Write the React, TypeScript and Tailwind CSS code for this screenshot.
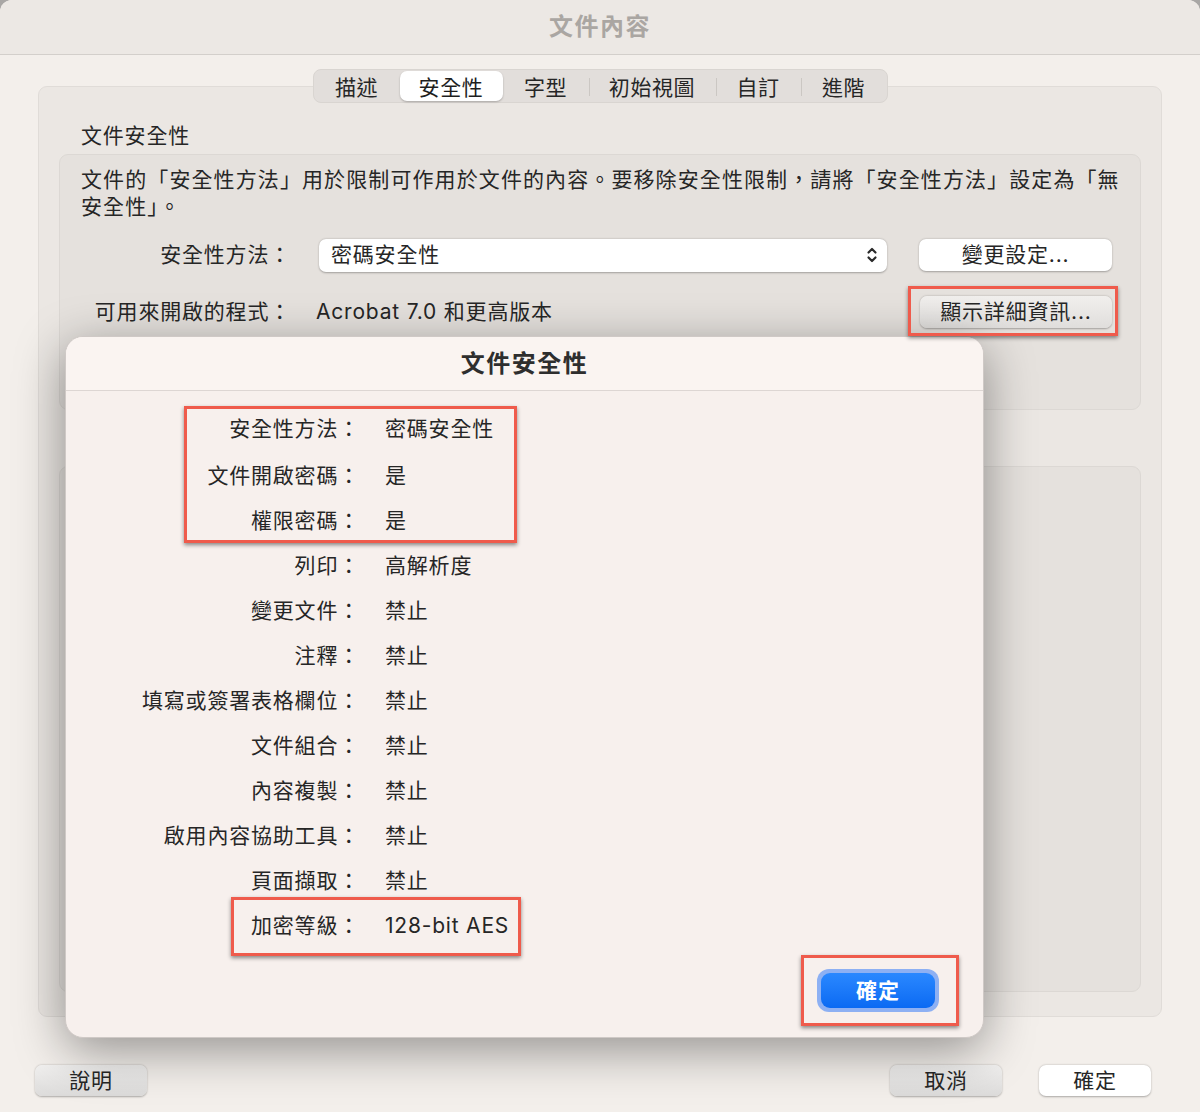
import React from "react";

const FONT = "font-['Inter','Noto_Sans_CJK_TC',sans-serif]";

function Chevrons() {
  return (
    <svg width="12" height="18" viewBox="0 0 12 18" fill="none" stroke="#2a2a2a" strokeWidth="2.2" strokeLinecap="round" strokeLinejoin="round">
      <path d="M2.5 6.5 L6 3 L9.5 6.5" />
      <path d="M2.5 11.5 L6 15 L9.5 11.5" />
    </svg>
  );
}

const tabs = [
  { label: "描述", w: "w-[86px]" },
  { label: "安全性", w: "w-[103px]", active: true },
  { label: "字型", w: "w-[86px]" },
  { label: "初始視圖", w: "w-[127px]", sep: true },
  { label: "自訂", w: "w-[85px]", sep: true },
  { label: "進階", w: "w-[86px]", sep: true },
];

const rows: [string, string][] = [
  ["安全性方法：", "密碼安全性"],
  ["文件開啟密碼：", "是"],
  ["權限密碼：", "是"],
  ["列印：", "高解析度"],
  ["變更文件：", "禁止"],
  ["注釋：", "禁止"],
  ["填寫或簽署表格欄位：", "禁止"],
  ["文件組合：", "禁止"],
  ["內容複製：", "禁止"],
  ["啟用內容協助工具：", "禁止"],
  ["頁面擷取：", "禁止"],
  ["加密等級：", "128-bit AES"],
];

export default function App() {
  return (
    <div className={`${FONT} relative w-[1200px] h-[1112px] overflow-hidden bg-[#a9a7a5] text-[#262626]`}>
      <div className="flex flex-col w-full h-full rounded-t-[12px] overflow-hidden bg-[#f3efeb]">
        {/* title bar */}
        <div className="h-[55px] shrink-0 flex items-center justify-center bg-[#ece8e4] border-b border-[#d3cfcb]">
          <span className="text-[24px] font-bold text-[#aaa6a2] tracking-[1.5px]">文件內容</span>
        </div>

        {/* body */}
        <div className="flex flex-col flex-1 px-[38px]">
          {/* segmented control */}
          <div className="relative z-10 mt-[14px] self-center flex items-center h-[34px] rounded-[8px] bg-[#e2dedb] border border-[#d9d5d1]">
            {tabs.map((t) => (
              <div key={t.label} className={`relative h-full flex items-center justify-center ${t.w}`}>
                {t.sep && <div className="absolute left-0 top-[8px] h-[18px] w-px bg-[#cbc7c3]" />}
                {t.active ? (
                  <div className="w-[103px] h-[30px] rounded-[7px] bg-white shadow-[0_1px_2px_rgba(0,0,0,0.25)] flex items-center justify-center text-[21px] tracking-[0.6px] pt-[3px] text-[#1e1e1e]">
                    {t.label}
                  </div>
                ) : (
                  <span className="text-[21px] tracking-[0.6px] pt-[3px] text-[#262626]">{t.label}</span>
                )}
              </div>
            ))}
          </div>

          {/* tab box */}
          <div className="-mt-[17px] h-[931px] rounded-[9px] bg-[#ebe7e3] border border-[#e0dcd8] px-[20px] flex flex-col">
            <div className="pt-[35px] pl-[22px] text-[21px] leading-[28px] tracking-[0.8px]">文件安全性</div>

            <div className="mt-[4px] h-[256px] rounded-[9px] bg-[#e5e1dd] border border-[#dcd8d4] flex flex-col">
              <p className="pt-[11px] pl-[21px] pr-[10px] text-[21px] leading-[27px] tracking-[1.1px]">
                文件的「安全性方法」用於限制可作用於文件的內容。要移除安全性限制，請將「安全性方法」設定為「無
                <br />
                安全性」。
              </p>

              <div className="mt-[18px] flex items-center h-[34px] text-[21px] tracking-[0.8px]">
                <div className="w-[238px] text-right pr-[7px]">安全性方法：</div>
                <div className="ml-[21px] w-[568px] h-[33px] rounded-[7px] bg-white shadow-[0_0.5px_2px_rgba(0,0,0,0.3)] flex items-center justify-between pl-[12px] pr-[9px]">
                  <span>密碼安全性</span>
                  <Chevrons />
                </div>
                <div className="ml-[32px] w-[193px] h-[32px] rounded-[7px] bg-white shadow-[0_0.5px_2px_rgba(0,0,0,0.3)] flex items-center justify-center">
                  變更設定...
                </div>
              </div>

              <div className="mt-[23px] flex items-center h-[34px] text-[21px] tracking-[0.8px]">
                <div className="w-[238px] text-right pr-[7px]">可用來開啟的程式：</div>
                <div className="ml-[18px]">Acrobat 7.0 和更高版本</div>
                <div className="ml-auto mr-[28px] w-[192px] h-[32px] rounded-[7px] bg-gradient-to-b from-[#f1efed] to-[#e0dedc] shadow-[0_0.5px_2px_rgba(0,0,0,0.3)] flex items-center justify-center">
                  顯示詳細資訊...
                </div>
              </div>
            </div>

            <div className="mt-[56px] h-[526px] rounded-[9px] bg-[#e5e1dd] border border-[#dcd8d4]" />
          </div>

          {/* bottom buttons */}
          <div className="mt-[48px] flex items-center text-[21px] tracking-[0.8px]">
            <div className="ml-[-3px] w-[112px] h-[31px] rounded-[7px] bg-gradient-to-b from-[#f2f1f0] to-[#dcdbda] shadow-[0_0.5px_2px_rgba(0,0,0,0.3)] flex items-center justify-center">
              說明
            </div>
            <div className="ml-auto w-[112px] h-[31px] rounded-[7px] bg-gradient-to-b from-[#f2f1f0] to-[#dcdbda] shadow-[0_0.5px_2px_rgba(0,0,0,0.3)] flex items-center justify-center">
              取消
            </div>
            <div className="ml-[37px] mr-[11px] w-[112px] h-[31px] rounded-[7px] bg-white shadow-[0_0.5px_2px_rgba(0,0,0,0.3)] flex items-center justify-center">
              確定
            </div>
          </div>
        </div>
      </div>

      {/* sheet dialog */}
      <div className="absolute left-[65px] top-[336px] w-[919px] h-[702px] rounded-[18px] bg-[#f7f0ed] border border-[#cfc9c6] shadow-[0_12px_50px_rgba(0,0,0,0.4)] flex flex-col overflow-hidden">
        <div className="h-[54px] shrink-0 flex items-center justify-center bg-[#faf4f1] border-b border-[#ddd6d3]">
          <span className="text-[24px] font-bold text-[#2e2e2e] tracking-[1.5px]">文件安全性</span>
        </div>
        <div className="pt-[15px] flex flex-col text-[21px] tracking-[0.8px]">
          {rows.map(([k, v], i) => (
            <div key={i} className={`flex items-center h-[45px] ${i === 1 ? "mt-[2px]" : ""}`}>
              <div className="w-[294px] text-right whitespace-nowrap">{k}</div>
              <div className="ml-[25px] whitespace-nowrap">{v}</div>
            </div>
          ))}
        </div>
        <div className="flex-1" />
        <div className="flex justify-end pr-[44px] pb-[25px]">
          <div className="w-[122px] h-[43px] rounded-[12px] bg-[#8db0f3] p-[4px]">
            <div className="w-full h-full rounded-[9px] bg-gradient-to-b from-[#2a88ff] to-[#0a6af3] flex items-center justify-center text-white text-[21px] font-bold tracking-[1px]">
              確定
            </div>
          </div>
        </div>
      </div>

      {/* annotation boxes */}
      <div className="absolute left-[908px] top-[286px] w-[210px] h-[50px] border-[3px] border-[#ef5b4c] shadow-[0_2px_4px_rgba(0,0,0,0.45)]" />
      <div className="absolute left-[184px] top-[406px] w-[333px] h-[137px] border-[3px] border-[#ef5b4c] shadow-[0_2px_4px_rgba(0,0,0,0.45)]" />
      <div className="absolute left-[231px] top-[897px] w-[290px] h-[59px] border-[3px] border-[#ef5b4c] shadow-[0_2px_4px_rgba(0,0,0,0.45)]" />
      <div className="absolute left-[801px] top-[955px] w-[158px] h-[71px] border-[3px] border-[#ef5b4c] shadow-[0_2px_4px_rgba(0,0,0,0.45)]" />
    </div>
  );
}
